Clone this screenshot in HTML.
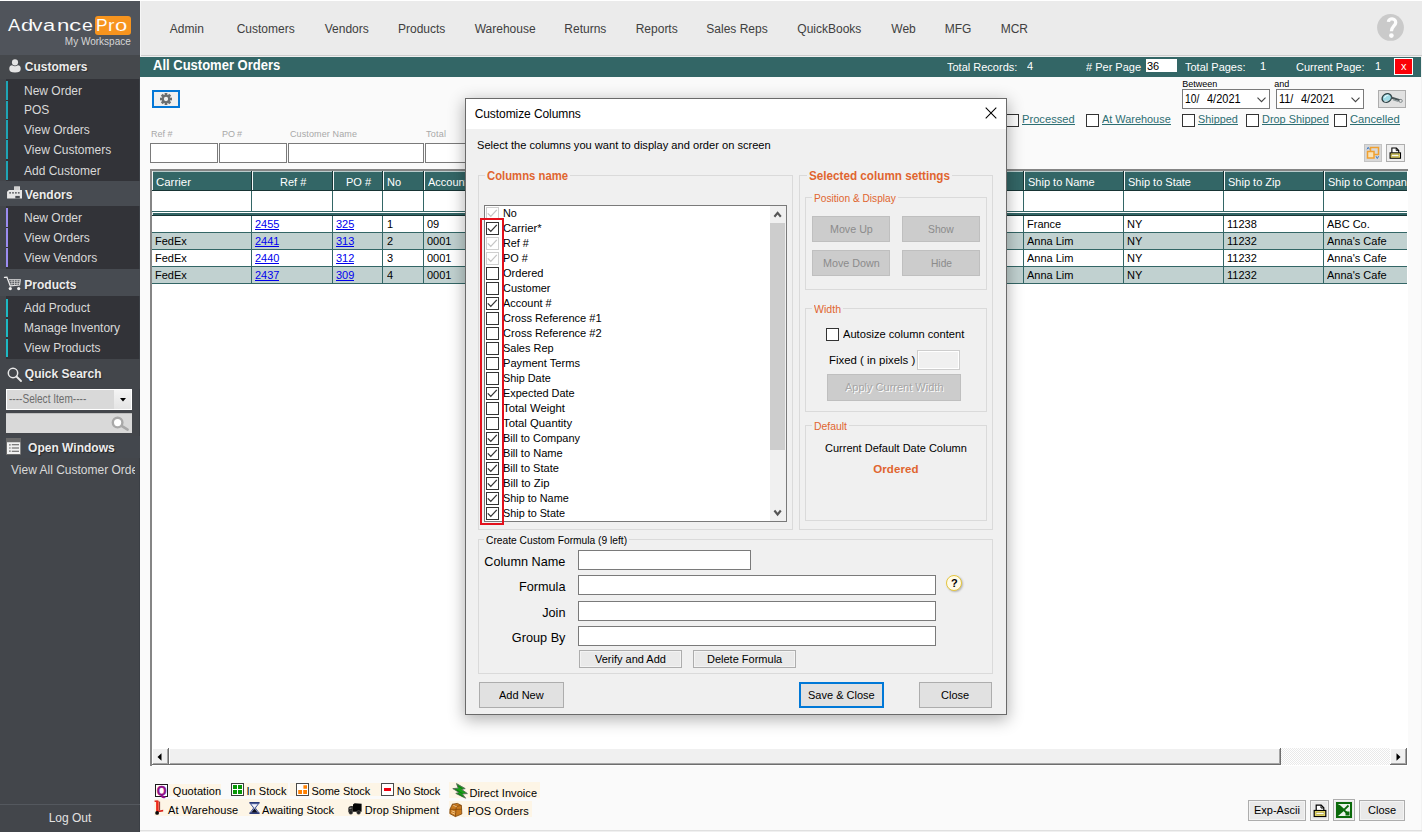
<!DOCTYPE html>
<html>
<head>
<meta charset="utf-8">
<title>All Customer Orders</title>
<style>
*{box-sizing:border-box;margin:0;padding:0}
html,body{width:1422px;height:832px;overflow:hidden;background:#fafafa;font-family:"Liberation Sans",sans-serif;font-size:11px;color:#000}
.a{position:absolute}
.t{position:absolute;white-space:nowrap;line-height:1}
svg{display:block;overflow:visible}
</style>
</head>
<body>
<!-- sidebar -->
<div class="a" style="left:0px;top:0px;width:140px;height:832px;background:#43464b;border-right:1px solid #3b3f45"></div>
<div class="a" style="left:0px;top:0px;width:140px;height:55px;background:#50545b"></div>
<div class="t" style="left:7.95px;top:18px;font-size:16px;color:#fff;transform:scaleX(1.151);transform-origin:0 0;-webkit-text-stroke:.08px #50545b">A</div>
<div class="t" style="left:20.57px;top:18px;font-size:16px;color:#fff;transform:scaleX(1.375);transform-origin:0 0;-webkit-text-stroke:.08px #50545b">d</div>
<div class="t" style="left:31.90px;top:18px;font-size:16px;color:#fff;transform:scaleX(1.301);transform-origin:0 0;-webkit-text-stroke:.08px #50545b">v</div>
<div class="t" style="left:43.17px;top:18px;font-size:16px;color:#fff;transform:scaleX(1.366);transform-origin:0 0;-webkit-text-stroke:.08px #50545b">a</div>
<div class="t" style="left:56.70px;top:18px;font-size:16px;color:#fff;transform:scaleX(1.391);transform-origin:0 0;-webkit-text-stroke:.08px #50545b">n</div>
<div class="t" style="left:69.36px;top:18px;font-size:16px;color:#fff;transform:scaleX(1.526);transform-origin:0 0;-webkit-text-stroke:.08px #50545b">c</div>
<div class="t" style="left:81.97px;top:18px;font-size:16px;color:#fff;transform:scaleX(1.223);transform-origin:0 0;-webkit-text-stroke:.08px #50545b">e</div>
<div class="a" style="left:94.7px;top:16px;width:36.2px;height:18.6px;background:#f7941e;border-radius:3px"></div>
<div class="t" style="left:96.37px;top:18px;font-size:16px;color:#fff;transform:scaleX(1.080);transform-origin:0 0;-webkit-text-stroke:.08px #f7941e">P</div>
<div class="t" style="left:108.30px;top:18px;font-size:16px;color:#fff;transform:scaleX(1.200);transform-origin:0 0;-webkit-text-stroke:.08px #f7941e">r</div>
<div class="t" style="left:115.36px;top:18px;font-size:16px;color:#fff;transform:scaleX(1.376);transform-origin:0 0;-webkit-text-stroke:.08px #f7941e">o</div>
<div class="t" style="left:64.86px;top:37px;font-size:10px;color:#d6d6d6">My Workspace</div>
<div class="a" style="left:0px;top:55px;width:140px;height:24px;background:#45484c"></div>
<div class="t" style="left:24.80px;top:61px;font-size:12px;color:#ececec;font-weight:bold;text-shadow:1px 1px 1px rgba(0,0,0,.4)">Customers</div>
<div class="a" style="left:6px;top:79px;width:133px;height:102px;background:#323338"></div>
<div class="a" style="left:6px;top:81.1px;width:2px;height:18.6px;background:#1fa5b6"></div>
<div class="t" style="left:24.00px;top:85px;font-size:12px;color:#d9d9d9">New Order</div>
<div class="a" style="left:6px;top:100.6px;width:2px;height:18.6px;background:#1fa5b6"></div>
<div class="t" style="left:24.00px;top:104px;font-size:12px;color:#d9d9d9">POS</div>
<div class="a" style="left:6px;top:120.4px;width:2px;height:18.6px;background:#1fa5b6"></div>
<div class="t" style="left:24.00px;top:124px;font-size:12px;color:#d9d9d9">View Orders</div>
<div class="a" style="left:6px;top:140.4px;width:2px;height:18.6px;background:#1fa5b6"></div>
<div class="t" style="left:24.00px;top:144px;font-size:12px;color:#d9d9d9">View Customers</div>
<div class="a" style="left:6px;top:161.1px;width:2px;height:18.6px;background:#1fa5b6"></div>
<div class="t" style="left:24.00px;top:165px;font-size:12px;color:#d9d9d9">Add Customer</div>
<div class="a" style="left:0px;top:181px;width:140px;height:25px;background:#474b51"></div>
<div class="t" style="left:25.00px;top:189px;font-size:12px;color:#ececec;font-weight:bold;text-shadow:1px 1px 1px rgba(0,0,0,.4)">Vendors</div>
<div class="a" style="left:6px;top:206px;width:133px;height:62.5px;background:#323338"></div>
<div class="a" style="left:6px;top:208.2px;width:2px;height:18.6px;background:#9b8cf0"></div>
<div class="t" style="left:24.00px;top:212px;font-size:12px;color:#d9d9d9">New Order</div>
<div class="a" style="left:6px;top:228.4px;width:2px;height:18.6px;background:#9b8cf0"></div>
<div class="t" style="left:24.00px;top:232px;font-size:12px;color:#d9d9d9">View Orders</div>
<div class="a" style="left:6px;top:248.3px;width:2px;height:18.6px;background:#9b8cf0"></div>
<div class="t" style="left:24.00px;top:252px;font-size:12px;color:#d9d9d9">View Vendors</div>
<div class="a" style="left:0px;top:268.5px;width:140px;height:27.5px;background:#474b51"></div>
<div class="t" style="left:24.30px;top:279px;font-size:12px;color:#ececec;font-weight:bold;text-shadow:1px 1px 1px rgba(0,0,0,.4)">Products</div>
<div class="a" style="left:6px;top:296px;width:133px;height:62.5px;background:#323338"></div>
<div class="a" style="left:6px;top:298.6px;width:2px;height:18.6px;background:#1db9c3"></div>
<div class="t" style="left:24.00px;top:302px;font-size:12px;color:#d9d9d9">Add Product</div>
<div class="a" style="left:6px;top:318.6px;width:2px;height:18.6px;background:#1db9c3"></div>
<div class="t" style="left:24.00px;top:322px;font-size:12px;color:#d9d9d9">Manage Inventory</div>
<div class="a" style="left:6px;top:338.6px;width:2px;height:18.6px;background:#1db9c3"></div>
<div class="t" style="left:24.00px;top:342px;font-size:12px;color:#d9d9d9">View Products</div>
<div class="a" style="left:0px;top:358.5px;width:140px;height:30px;background:#43464b"></div>
<div class="t" style="left:24.80px;top:368px;font-size:12px;color:#ececec;font-weight:bold;text-shadow:1px 1px 1px rgba(0,0,0,.4)">Quick Search</div>
<svg class="a" style="left:8.5px;top:58.5px" width="12" height="13.85" viewBox="0 0 13 15"><circle cx="6.5" cy="3.7" r="3.3" fill="#e4e4e4"/><path d="M0.3 10.8 Q0.3 6.9 3.3 6.8 Q6.5 9 9.7 6.8 Q12.7 6.9 12.7 10.8 Q12.7 14.6 6.5 14.6 Q0.3 14.6 0.3 10.8Z" fill="#e4e4e4"/></svg>
<svg class="a" style="left:7px;top:185.8px" width="15" height="13" viewBox="0 0 15 13"><path d="M7.05 0.35h5.95v4.2h-5.95z" fill="#dcdcdc"/><path d="M8.3 0.6v3.4M9.4 0.6v3.4M10.5 0.6v3.4M11.6 0.6v3.4" stroke="#c4c4c4" stroke-width=".55"/><path d="M0.05 5.8 L2 3.95 H15 V12.4 H0.05Z" fill="#e6e6e6"/><path d="M2.25 6.2h1.7v1.3h-1.7zM5.15 6.2h1.7v1.3h-1.7zM8.05 6.2h1.7v1.3h-1.7zM10.9 6.2h1.7v1.3h-1.7z" fill="#3c3f44"/><path d="M8.3 9.9h4.5v2.5h-4.5z" fill="#4a4d52"/></svg>
<svg class="a" style="left:4px;top:276px" width="17" height="15" viewBox="0 0 17 15"><path d="M0.5 1.35 L2.9 1.1 L6.3 9.9" fill="none" stroke="#ececec" stroke-width="1.3" stroke-linecap="round"/><path d="M4.9 3.75 H16.3 L15.6 9 L6.3 9.9" fill="none" stroke="#e4e4e4" stroke-width="1.1"/><path d="M7.9 3.8v5.8M10.5 3.8v5.5M13.1 3.8v5.3M5.6 5.7h10.4M6.3 7.6h9.6" stroke="#d6d6d6" stroke-width=".75"/><circle cx="6.3" cy="12.6" r="1.6" fill="#efefef"/><circle cx="14.7" cy="12.6" r="1.6" fill="#efefef"/></svg>
<svg class="a" style="left:6.5px;top:366.5px" width="15" height="15" viewBox="0 0 15 15"><circle cx="6" cy="6" r="4.7" fill="none" stroke="#e8e8e8" stroke-width="1.5"/><path d="M9.5 9.5 L14 14" stroke="#e8e8e8" stroke-width="1.9" stroke-linecap="round"/></svg>
<div class="a" style="left:6px;top:389px;width:126px;height:21px;background:#fff"></div>
<div class="a" style="left:7px;top:390px;width:107px;height:19px;background:#d9d9d9"></div>
<div class="a" style="left:114px;top:390px;width:17px;height:19px;background:linear-gradient(#f4f4f4,#e4e4e4)"></div>
<div class="t" style="left:8.6px;top:393px;font-size:12px;color:#6c6c6c;transform:scaleX(.84);transform-origin:0 0">----Select Item----</div>
<svg class="a" style="left:120.3px;top:397.5px" width="6" height="4" viewBox="0 0 6 4"><path d="M0 0H6L3 3.6Z" fill="#000"/></svg>
<div class="a" style="left:6px;top:412.5px;width:126px;height:20.5px;background:#d9d9d9;border-top:1px solid #bdbdbd"></div>
<svg class="a" style="left:110.5px;top:416px" width="18" height="15" viewBox="0 0 18 15"><circle cx="6.6" cy="6.6" r="4.8" fill="#fff" stroke="#a9a9a9" stroke-width="2.4"/><path d="M11 10.2 L16.6 13.6" stroke="#a9a9a9" stroke-width="2.6" stroke-linecap="round"/></svg>
<div class="a" style="left:3px;top:436px;width:137px;height:22px;background:#43474d"></div>
<div class="a" style="left:6px;top:438px;width:15.2px;height:17px;background:#6b6b6b"></div>
<svg class="a" style="left:6px;top:438px" width="15.2" height="17" viewBox="0 0 15.2 17"><path d="M1 4.2h13.2v11.8h-10.8l-2.4-0z" fill="#f2f2f2"/><path d="M3.2 6.8h1.4M3.2 10h1.4M3.2 13.2h1.4" stroke="#555" stroke-width="1.2"/><path d="M5.8 6.8h7.2M5.8 10h7.2M5.8 13.2h7.2" stroke="#555" stroke-width="1.1"/></svg>
<div class="t" style="left:28.10px;top:442px;font-size:12px;color:#ececec;font-weight:bold;text-shadow:1px 1px 1px rgba(0,0,0,.55)">Open Windows</div>
<div class="a" style="left:0;top:460px;width:135px;height:20px;overflow:hidden"><div class="t" style="left:11.00px;top:4px;font-size:12px;color:#d9d9d9">View All Customer Orde</div></div>
<div class="a" style="left:0px;top:803.5px;width:140px;height:1px;background:#54585e"></div>
<div class="t" style="left:48.65px;top:812px;font-size:12px;color:#e2e2e2">Log Out</div>
<!-- topbar -->
<div class="a" style="left:140px;top:0px;width:1282px;height:55px;background:#ebebeb"></div>
<div class="a" style="left:140px;top:55px;width:1282px;height:1px;background:#cdcdcd"></div>
<div class="a" style="left:140px;top:56px;width:1282px;height:1px;background:#efefef"></div>
<div class="a" style="left:0px;top:0px;width:1422px;height:1px;background:#fff"></div>
<div class="a" style="left:140px;top:1px;width:1px;height:55px;background:#f6f6f6"></div>
<div class="a" style="left:1421px;top:57px;width:1px;height:775px;background:#f2f2f2"></div>
<div class="t" style="left:169.80px;top:23px;font-size:12px;color:#404040">Admin</div>
<div class="t" style="left:236.70px;top:23px;font-size:12px;color:#404040">Customers</div>
<div class="t" style="left:324.70px;top:23px;font-size:12px;color:#404040">Vendors</div>
<div class="t" style="left:398.00px;top:23px;font-size:12px;color:#404040">Products</div>
<div class="t" style="left:474.70px;top:23px;font-size:12px;color:#404040">Warehouse</div>
<div class="t" style="left:564.30px;top:23px;font-size:12px;color:#404040">Returns</div>
<div class="t" style="left:635.70px;top:23px;font-size:12px;color:#404040">Reports</div>
<div class="t" style="left:706.30px;top:23px;font-size:12px;color:#404040">Sales Reps</div>
<div class="t" style="left:797.30px;top:23px;font-size:12px;color:#404040">QuickBooks</div>
<div class="t" style="left:891.30px;top:23px;font-size:12px;color:#404040">Web</div>
<div class="t" style="left:944.70px;top:23px;font-size:12px;color:#404040">MFG</div>
<div class="t" style="left:1000.70px;top:23px;font-size:12px;color:#404040">MCR</div>
<svg class="a" style="left:1377px;top:14px" width="27" height="27" viewBox="0 0 27 27"><circle cx="13.5" cy="13.4" r="13.4" fill="#cacaca"/><path d="M11.4 7.9 C11.6 3.9 18.9 3.8 18.7 8.6 C18.6 11.9 14.5 12.3 14.4 17.3" fill="none" stroke="#fdfdfd" stroke-width="3.3"/><circle cx="14.4" cy="21.6" r="2.35" fill="#fdfdfd"/></svg>
<div class="a" style="left:140px;top:57px;width:1281px;height:20px;background:#336666"></div>
<div class="t" style="left:152.50px;top:58px;font-size:14px;transform:scaleX(0.9290);transform-origin:0 0;color:#fff;font-weight:bold">All Customer Orders</div>
<div class="t" style="left:947.30px;top:61px;font-size:11.75px;transform:scaleX(0.9362);transform-origin:0 0;color:#fff">Total Records:</div>
<div class="t" style="left:1027.00px;top:60px;font-size:11.75px;transform:scaleX(0.9362);transform-origin:0 0;color:#fff">4</div>
<div class="t" style="left:1085.70px;top:61px;font-size:11.75px;transform:scaleX(0.9362);transform-origin:0 0;color:#fff"># Per Page</div>
<div class="a" style="left:1146px;top:59.3px;width:30.5px;height:13px;background:#fff"></div>
<div class="t" style="left:1146.60px;top:60px;font-size:11.75px;transform:scaleX(0.9362);transform-origin:0 0;color:#000">36</div>
<div class="t" style="left:1185.00px;top:61px;font-size:11.75px;transform:scaleX(0.9362);transform-origin:0 0;color:#fff">Total Pages:</div>
<div class="t" style="left:1259.50px;top:60px;font-size:11.75px;transform:scaleX(0.9362);transform-origin:0 0;color:#fff">1</div>
<div class="t" style="left:1296.00px;top:61px;font-size:11.75px;transform:scaleX(0.9362);transform-origin:0 0;color:#fff">Current Page:</div>
<div class="t" style="left:1375.20px;top:60px;font-size:11.75px;transform:scaleX(0.9362);transform-origin:0 0;color:#fff">1</div>
<div class="a" style="left:1394px;top:58.3px;width:19px;height:17px;background:#fb0007;border:1px solid #fff"></div>
<div class="t" style="left:1400.75px;top:60px;font-size:11.75px;transform:scaleX(0.9362);transform-origin:0 0;color:#fff">x</div>
<!-- content -->
<div class="a" style="left:152px;top:90px;width:28px;height:18px;background:#efefef;border:2px solid #0377d7"></div>
<svg class="a" style="left:160px;top:93px" width="12" height="12" viewBox="-6 -6 12 12"><g fill="#6b6e70"><rect x="-1.35" y="-6" width="2.7" height="3.2" transform="rotate(0)"/><rect x="-1.35" y="-6" width="2.7" height="3.2" transform="rotate(45)"/><rect x="-1.35" y="-6" width="2.7" height="3.2" transform="rotate(90)"/><rect x="-1.35" y="-6" width="2.7" height="3.2" transform="rotate(135)"/><rect x="-1.35" y="-6" width="2.7" height="3.2" transform="rotate(180)"/><rect x="-1.35" y="-6" width="2.7" height="3.2" transform="rotate(225)"/><rect x="-1.35" y="-6" width="2.7" height="3.2" transform="rotate(270)"/><rect x="-1.35" y="-6" width="2.7" height="3.2" transform="rotate(315)"/></g><circle r="3.2" fill="none" stroke="#6b6e70" stroke-width="2.1"/></svg>
<div class="t" style="left:151.00px;top:130px;font-size:9px;letter-spacing:-0.022px;color:#a8a8a8">Ref #</div>
<div class="t" style="left:222.00px;top:130px;font-size:9px;letter-spacing:-0.127px;color:#a8a8a8">PO #</div>
<div class="t" style="left:290.00px;top:130px;font-size:9px;letter-spacing:0.114px;color:#a8a8a8">Customer Name</div>
<div class="t" style="left:426.00px;top:130px;font-size:9px;letter-spacing:0.238px;color:#a8a8a8">Total</div>
<div class="a" style="left:150px;top:143px;width:68px;height:20px;background:#fff;border:1px solid #7a7a7a"></div>
<div class="a" style="left:219px;top:143px;width:68px;height:20px;background:#fff;border:1px solid #7a7a7a"></div>
<div class="a" style="left:288px;top:143px;width:136px;height:20px;background:#fff;border:1px solid #7a7a7a"></div>
<div class="a" style="left:425px;top:143px;width:135px;height:20px;background:#fff;border:1px solid #7a7a7a"></div>
<div class="t" style="left:1182.30px;top:80px;font-size:9px;color:#000">Between</div>
<div class="t" style="left:1274.20px;top:80px;font-size:9px;color:#000">and</div>
<div class="a" style="left:1182px;top:89px;width:88px;height:20px;background:#fff;border:1px solid #7a7a7a"></div>
<div class="t" style="left:1184.60px;top:93px;font-size:12px;transform:scaleX(0.8573);transform-origin:0 0;color:#000">10/</div>
<div class="t" style="left:1207.20px;top:93px;font-size:12px;transform:scaleX(0.9155);transform-origin:0 0;color:#000">4/2021</div>
<svg class="a" style="left:1256.8px;top:97px" width="9" height="6" viewBox="0 0 9 6"><path d="M0.5 0.6 L4.5 4.6 L8.5 0.6" fill="none" stroke="#444" stroke-width="1.1"/></svg>
<div class="a" style="left:1276px;top:89px;width:88px;height:20px;background:#fff;border:1px solid #7a7a7a"></div>
<div class="t" style="left:1278.60px;top:93px;font-size:12px;transform:scaleX(0.9057);transform-origin:0 0;color:#000">11/</div>
<div class="t" style="left:1301.20px;top:93px;font-size:12px;transform:scaleX(0.9155);transform-origin:0 0;color:#000">4/2021</div>
<svg class="a" style="left:1350.8px;top:97px" width="9" height="6" viewBox="0 0 9 6"><path d="M0.5 0.6 L4.5 4.6 L8.5 0.6" fill="none" stroke="#444" stroke-width="1.1"/></svg>
<div class="a" style="left:1378px;top:90px;width:28px;height:18px;background:#e1e1e1;border:1px solid #adadad"></div>
<svg class="a" style="left:1381px;top:92px" width="22" height="14" viewBox="0 0 22 14"><ellipse cx="5.8" cy="6" rx="4.9" ry="4.1" transform="rotate(-32 5.8 6)" fill="#9fdbe6" stroke="#2f4346" stroke-width="1.4"/><path d="M3.4 5.8 Q4.6 3.2 7.4 3" fill="none" stroke="#e8fbff" stroke-width="1.1"/><path d="M3.6 9.8 L6.4 8.6" stroke="#c8d4d6" stroke-width="1.6"/><path d="M10 5.4 L19.6 8.6" stroke="#4a5557" stroke-width="2.1"/><path d="M12 7.6 l5.4 1.9" stroke="#8a9698" stroke-width="1.3"/><ellipse cx="19.6" cy="8.9" rx="1.7" ry="1.5" fill="#e6e6e6" stroke="#6a7476" stroke-width=".8"/></svg>
<div class="a" style="left:1006px;top:114px;width:13px;height:13px;background:#fff;border:1px solid #333;"></div>
<div class="t" style="left:1022.00px;top:113px;font-size:11.75px;transform:scaleX(0.9494);transform-origin:0 0;color:#2d6e72">Processed</div>
<div class="a" style="left:1022px;top:124px;width:53px;height:1px;background:#2d6e72"></div>
<div class="a" style="left:1086px;top:114px;width:13px;height:13px;background:#fff;border:1px solid #333;"></div>
<div class="t" style="left:1102.00px;top:113px;font-size:11.75px;transform:scaleX(0.9282);transform-origin:0 0;color:#2d6e72">At Warehouse</div>
<div class="a" style="left:1102px;top:124px;width:69px;height:1px;background:#2d6e72"></div>
<div class="a" style="left:1182px;top:114px;width:13px;height:13px;background:#fff;border:1px solid #333;"></div>
<div class="t" style="left:1198.00px;top:113px;font-size:11.75px;transform:scaleX(0.9207);transform-origin:0 0;color:#2d6e72">Shipped</div>
<div class="a" style="left:1198px;top:124px;width:40px;height:1px;background:#2d6e72"></div>
<div class="a" style="left:1246px;top:114px;width:13px;height:13px;background:#fff;border:1px solid #333;"></div>
<div class="t" style="left:1262.00px;top:113px;font-size:11.75px;transform:scaleX(0.9283);transform-origin:0 0;color:#2d6e72">Drop Shipped</div>
<div class="a" style="left:1262px;top:124px;width:67px;height:1px;background:#2d6e72"></div>
<div class="a" style="left:1334px;top:114px;width:13px;height:13px;background:#fff;border:1px solid #333;"></div>
<div class="t" style="left:1350.00px;top:113px;font-size:11.75px;transform:scaleX(0.9511);transform-origin:0 0;color:#2d6e72">Cancelled</div>
<div class="a" style="left:1350px;top:124px;width:50px;height:1px;background:#2d6e72"></div>
<div class="a" style="left:1364px;top:144px;width:18px;height:18px;background:#d8d8d8;border:1px solid #c4c4c4"></div>
<svg class="a" style="left:1366px;top:146px" width="14" height="14" viewBox="0 0 14 14"><rect x="4.5" y="1.5" width="8" height="7" fill="none" stroke="#f0a030" stroke-width="1.5"/><rect x="1.5" y="5.5" width="6.5" height="6.5" fill="#fbe3b5" stroke="#f0a030" stroke-width="1.5"/><path d="M10 10.2l1.3 2.3 1.3-2.3" fill="none" stroke="#3a79c9" stroke-width="1"/><path d="M1 3.3l1.2-2 1.2 2" fill="none" stroke="#3a79c9" stroke-width="1"/></svg>
<div class="a" style="left:1386px;top:144px;width:19px;height:18px;background:#efefef;border:1px solid #adadad"></div>
<svg class="a" style="left:1389px;top:146.5px" width="12.6" height="12.6" viewBox="0 0 14 14"><path d="M3.2 6.5V1.2h5l2.6 2.6v2.7" fill="#fff" stroke="#000" stroke-width="1.2"/><path d="M8 1.2v2.8h2.6" fill="none" stroke="#000" stroke-width="1"/><rect x="1.2" y="6.5" width="11.6" height="6" fill="#f3e56c" stroke="#000" stroke-width="1.2"/><rect x="3" y="8.6" width="8" height="1.6" fill="#fff" stroke="#8a8030" stroke-width=".5"/></svg>
<div class="a" style="left:150px;top:169px;width:1258px;height:597px;background:#fff;border-top:2px solid;border-left:2px solid;border-color:#858585;box-shadow:inset -1px -1px 0 #fff"></div>
<div class="a" style="left:0;top:0;width:1407px;height:766px;overflow:hidden"><div class="a" style="left:152px;top:171px;width:1255px;height:19px;background:#336666;border-top:1px solid #b9cccc"></div><div class="a" style="left:152px;top:190px;width:1255px;height:1px;background:#173434"></div><div class="a" style="left:152px;top:171px;width:1px;height:19px;background:#f4f7f7"></div><div class="a" style="left:251px;top:171px;width:1px;height:20px;background:#173434"></div><div class="t" style="left:156.20px;top:176px;font-size:11.75px;transform:scaleX(0.9736);transform-origin:0 0;color:#fff">Carrier</div><div class="a" style="left:252px;top:171px;width:1px;height:19px;background:#f4f7f7"></div><div class="a" style="left:332px;top:171px;width:1px;height:20px;background:#173434"></div><div class="t" style="left:280.36px;top:176px;font-size:11.75px;transform:scaleX(0.9362);transform-origin:0 0;color:#fff">Ref #</div><div class="a" style="left:333px;top:171px;width:1px;height:19px;background:#f4f7f7"></div><div class="a" style="left:382px;top:171px;width:1px;height:20px;background:#173434"></div><div class="t" style="left:346.47px;top:176px;font-size:11.75px;transform:scaleX(0.9362);transform-origin:0 0;color:#fff">PO #</div><div class="a" style="left:383px;top:171px;width:1px;height:19px;background:#f4f7f7"></div><div class="a" style="left:423px;top:171px;width:1px;height:20px;background:#173434"></div><div class="t" style="left:387.20px;top:176px;font-size:11.75px;transform:scaleX(0.9362);transform-origin:0 0;color:#fff">No</div><div class="a" style="left:424px;top:171px;width:1px;height:19px;background:#f4f7f7"></div><div class="a" style="left:523px;top:171px;width:1px;height:20px;background:#173434"></div><div class="t" style="left:428.20px;top:176px;font-size:11.75px;transform:scaleX(0.9362);transform-origin:0 0;color:#fff">Account #</div><div class="a" style="left:524px;top:171px;width:1px;height:19px;background:#f4f7f7"></div><div class="a" style="left:623px;top:171px;width:1px;height:20px;background:#173434"></div><div class="t" style="left:528.20px;top:176px;font-size:11.75px;transform:scaleX(0.9362);transform-origin:0 0;color:#fff">Expected Date</div><div class="a" style="left:624px;top:171px;width:1px;height:19px;background:#f4f7f7"></div><div class="a" style="left:723px;top:171px;width:1px;height:20px;background:#173434"></div><div class="t" style="left:628.20px;top:176px;font-size:11.75px;transform:scaleX(0.9362);transform-origin:0 0;color:#fff">Bill to Company</div><div class="a" style="left:724px;top:171px;width:1px;height:19px;background:#f4f7f7"></div><div class="a" style="left:823px;top:171px;width:1px;height:20px;background:#173434"></div><div class="t" style="left:728.20px;top:176px;font-size:11.75px;transform:scaleX(0.9362);transform-origin:0 0;color:#fff">Bill to Name</div><div class="a" style="left:824px;top:171px;width:1px;height:19px;background:#f4f7f7"></div><div class="a" style="left:923px;top:171px;width:1px;height:20px;background:#173434"></div><div class="t" style="left:828.20px;top:176px;font-size:11.75px;transform:scaleX(0.9362);transform-origin:0 0;color:#fff">Bill to State</div><div class="a" style="left:924px;top:171px;width:1px;height:19px;background:#f4f7f7"></div><div class="a" style="left:1023px;top:171px;width:1px;height:20px;background:#173434"></div><div class="t" style="left:928.20px;top:176px;font-size:11.75px;transform:scaleX(0.9362);transform-origin:0 0;color:#fff">Bill to Zip</div><div class="a" style="left:1024px;top:171px;width:1px;height:19px;background:#f4f7f7"></div><div class="a" style="left:1123px;top:171px;width:1px;height:20px;background:#173434"></div><div class="t" style="left:1028.20px;top:176px;font-size:11.75px;transform:scaleX(0.9362);transform-origin:0 0;color:#fff">Ship to Name</div><div class="a" style="left:1124px;top:171px;width:1px;height:19px;background:#f4f7f7"></div><div class="a" style="left:1223px;top:171px;width:1px;height:20px;background:#173434"></div><div class="t" style="left:1128.20px;top:176px;font-size:11.75px;transform:scaleX(0.9362);transform-origin:0 0;color:#fff">Ship to State</div><div class="a" style="left:1224px;top:171px;width:1px;height:19px;background:#f4f7f7"></div><div class="a" style="left:1323px;top:171px;width:1px;height:20px;background:#173434"></div><div class="t" style="left:1228.20px;top:176px;font-size:11.75px;transform:scaleX(0.9362);transform-origin:0 0;color:#fff">Ship to Zip</div><div class="a" style="left:1324px;top:171px;width:1px;height:19px;background:#f4f7f7"></div><div class="a" style="left:1423px;top:171px;width:1px;height:20px;background:#173434"></div><div class="t" style="left:1328.20px;top:176px;font-size:11.75px;transform:scaleX(0.9362);transform-origin:0 0;color:#fff">Ship to Company</div><div class="a" style="left:152px;top:211px;width:1255px;height:1px;background:#336666"></div><div class="a" style="left:152px;top:213px;width:1255px;height:2px;background:#336666"></div><div class="a" style="left:152px;top:215px;width:1255px;height:1px;background:#173434"></div><div class="a" style="left:152px;top:212px;width:1px;height:3px;background:#e6eded"></div><div class="a" style="left:152px;top:232px;width:1255px;height:1px;background:#336666"></div><div class="t" style="left:155.00px;top:218px;font-size:11.75px;transform:scaleX(0.0000);transform-origin:0 0;color:#000"></div><div class="t" style="left:255.00px;top:218px;font-size:11.75px;transform:scaleX(0.9362);transform-origin:0 0;color:#0000ee">2455</div><div class="a" style="left:255px;top:229px;width:24px;height:1px;background:#0000ee"></div><div class="t" style="left:336.00px;top:218px;font-size:11.75px;transform:scaleX(0.9362);transform-origin:0 0;color:#0000ee">325</div><div class="a" style="left:336px;top:229px;width:18px;height:1px;background:#0000ee"></div><div class="t" style="left:386.50px;top:218px;font-size:11.75px;transform:scaleX(0.9362);transform-origin:0 0;color:#000">1</div><div class="t" style="left:427.20px;top:218px;font-size:11.75px;transform:scaleX(0.9362);transform-origin:0 0;color:#000">09</div><div class="t" style="left:1027.00px;top:218px;font-size:11.75px;transform:scaleX(0.9362);transform-origin:0 0;color:#000">France</div><div class="t" style="left:1127.00px;top:218px;font-size:11.75px;transform:scaleX(0.9362);transform-origin:0 0;color:#000">NY</div><div class="t" style="left:1227.00px;top:218px;font-size:11.75px;transform:scaleX(0.9362);transform-origin:0 0;color:#000">11238</div><div class="t" style="left:1327.00px;top:218px;font-size:11.75px;transform:scaleX(0.9362);transform-origin:0 0;color:#000">ABC Co.</div><div class="a" style="left:152px;top:233px;width:1255px;height:16px;background:#c1d1d0"></div><div class="a" style="left:152px;top:249px;width:1255px;height:1px;background:#336666"></div><div class="t" style="left:155.00px;top:235px;font-size:11.75px;transform:scaleX(0.9362);transform-origin:0 0;color:#000">FedEx</div><div class="t" style="left:255.00px;top:235px;font-size:11.75px;transform:scaleX(0.9362);transform-origin:0 0;color:#0000ee">2441</div><div class="a" style="left:255px;top:246px;width:24px;height:1px;background:#0000ee"></div><div class="t" style="left:336.00px;top:235px;font-size:11.75px;transform:scaleX(0.9362);transform-origin:0 0;color:#0000ee">313</div><div class="a" style="left:336px;top:246px;width:18px;height:1px;background:#0000ee"></div><div class="t" style="left:386.50px;top:235px;font-size:11.75px;transform:scaleX(0.9362);transform-origin:0 0;color:#000">2</div><div class="t" style="left:427.20px;top:235px;font-size:11.75px;transform:scaleX(0.9362);transform-origin:0 0;color:#000">0001</div><div class="t" style="left:1027.00px;top:235px;font-size:11.75px;transform:scaleX(0.9362);transform-origin:0 0;color:#000">Anna Lim</div><div class="t" style="left:1127.00px;top:235px;font-size:11.75px;transform:scaleX(0.9362);transform-origin:0 0;color:#000">NY</div><div class="t" style="left:1227.00px;top:235px;font-size:11.75px;transform:scaleX(0.9362);transform-origin:0 0;color:#000">11232</div><div class="t" style="left:1327.00px;top:235px;font-size:11.75px;transform:scaleX(0.9362);transform-origin:0 0;color:#000">Anna's Cafe</div><div class="a" style="left:152px;top:266px;width:1255px;height:1px;background:#336666"></div><div class="t" style="left:155.00px;top:252px;font-size:11.75px;transform:scaleX(0.9362);transform-origin:0 0;color:#000">FedEx</div><div class="t" style="left:255.00px;top:252px;font-size:11.75px;transform:scaleX(0.9362);transform-origin:0 0;color:#0000ee">2440</div><div class="a" style="left:255px;top:263px;width:24px;height:1px;background:#0000ee"></div><div class="t" style="left:336.00px;top:252px;font-size:11.75px;transform:scaleX(0.9362);transform-origin:0 0;color:#0000ee">312</div><div class="a" style="left:336px;top:263px;width:18px;height:1px;background:#0000ee"></div><div class="t" style="left:386.50px;top:252px;font-size:11.75px;transform:scaleX(0.9362);transform-origin:0 0;color:#000">3</div><div class="t" style="left:427.20px;top:252px;font-size:11.75px;transform:scaleX(0.9362);transform-origin:0 0;color:#000">0001</div><div class="t" style="left:1027.00px;top:252px;font-size:11.75px;transform:scaleX(0.9362);transform-origin:0 0;color:#000">Anna Lim</div><div class="t" style="left:1127.00px;top:252px;font-size:11.75px;transform:scaleX(0.9362);transform-origin:0 0;color:#000">NY</div><div class="t" style="left:1227.00px;top:252px;font-size:11.75px;transform:scaleX(0.9362);transform-origin:0 0;color:#000">11232</div><div class="t" style="left:1327.00px;top:252px;font-size:11.75px;transform:scaleX(0.9362);transform-origin:0 0;color:#000">Anna's Cafe</div><div class="a" style="left:152px;top:267px;width:1255px;height:16px;background:#c1d1d0"></div><div class="a" style="left:152px;top:283px;width:1255px;height:1px;background:#336666"></div><div class="t" style="left:155.00px;top:269px;font-size:11.75px;transform:scaleX(0.9362);transform-origin:0 0;color:#000">FedEx</div><div class="t" style="left:255.00px;top:269px;font-size:11.75px;transform:scaleX(0.9362);transform-origin:0 0;color:#0000ee">2437</div><div class="a" style="left:255px;top:280px;width:24px;height:1px;background:#0000ee"></div><div class="t" style="left:336.00px;top:269px;font-size:11.75px;transform:scaleX(0.9362);transform-origin:0 0;color:#0000ee">309</div><div class="a" style="left:336px;top:280px;width:18px;height:1px;background:#0000ee"></div><div class="t" style="left:386.50px;top:269px;font-size:11.75px;transform:scaleX(0.9362);transform-origin:0 0;color:#000">4</div><div class="t" style="left:427.20px;top:269px;font-size:11.75px;transform:scaleX(0.9362);transform-origin:0 0;color:#000">0001</div><div class="t" style="left:1027.00px;top:269px;font-size:11.75px;transform:scaleX(0.9362);transform-origin:0 0;color:#000">Anna Lim</div><div class="t" style="left:1127.00px;top:269px;font-size:11.75px;transform:scaleX(0.9362);transform-origin:0 0;color:#000">NY</div><div class="t" style="left:1227.00px;top:269px;font-size:11.75px;transform:scaleX(0.9362);transform-origin:0 0;color:#000">11232</div><div class="t" style="left:1327.00px;top:269px;font-size:11.75px;transform:scaleX(0.9362);transform-origin:0 0;color:#000">Anna's Cafe</div><div class="a" style="left:251px;top:191px;width:1px;height:20px;background:#336666"></div><div class="a" style="left:251px;top:216px;width:1px;height:68px;background:#336666"></div><div class="a" style="left:332px;top:191px;width:1px;height:20px;background:#336666"></div><div class="a" style="left:332px;top:216px;width:1px;height:68px;background:#336666"></div><div class="a" style="left:382px;top:191px;width:1px;height:20px;background:#336666"></div><div class="a" style="left:382px;top:216px;width:1px;height:68px;background:#336666"></div><div class="a" style="left:423px;top:191px;width:1px;height:20px;background:#336666"></div><div class="a" style="left:423px;top:216px;width:1px;height:68px;background:#336666"></div><div class="a" style="left:523px;top:191px;width:1px;height:20px;background:#336666"></div><div class="a" style="left:523px;top:216px;width:1px;height:68px;background:#336666"></div><div class="a" style="left:623px;top:191px;width:1px;height:20px;background:#336666"></div><div class="a" style="left:623px;top:216px;width:1px;height:68px;background:#336666"></div><div class="a" style="left:723px;top:191px;width:1px;height:20px;background:#336666"></div><div class="a" style="left:723px;top:216px;width:1px;height:68px;background:#336666"></div><div class="a" style="left:823px;top:191px;width:1px;height:20px;background:#336666"></div><div class="a" style="left:823px;top:216px;width:1px;height:68px;background:#336666"></div><div class="a" style="left:923px;top:191px;width:1px;height:20px;background:#336666"></div><div class="a" style="left:923px;top:216px;width:1px;height:68px;background:#336666"></div><div class="a" style="left:1023px;top:191px;width:1px;height:20px;background:#336666"></div><div class="a" style="left:1023px;top:216px;width:1px;height:68px;background:#336666"></div><div class="a" style="left:1123px;top:191px;width:1px;height:20px;background:#336666"></div><div class="a" style="left:1123px;top:216px;width:1px;height:68px;background:#336666"></div><div class="a" style="left:1223px;top:191px;width:1px;height:20px;background:#336666"></div><div class="a" style="left:1223px;top:216px;width:1px;height:68px;background:#336666"></div><div class="a" style="left:1323px;top:191px;width:1px;height:20px;background:#336666"></div><div class="a" style="left:1323px;top:216px;width:1px;height:68px;background:#336666"></div><div class="a" style="left:1423px;top:191px;width:1px;height:20px;background:#336666"></div><div class="a" style="left:1423px;top:216px;width:1px;height:68px;background:#336666"></div></div>
<div class="a" style="left:152px;top:748px;width:1255px;height:17px;background:#f6f6f6;background-image:repeating-conic-gradient(#fff 0 25%,#e9e9e9 0 50%);background-size:2px 2px"></div>
<div class="a" style="left:152px;top:748px;width:17px;height:17px;background:#f0f0f0;box-shadow:inset -1px -1px 0 #6e6e6e,inset 1px 1px 0 #fff,inset -2px -2px 0 #a5a5a5"></div>
<svg class="a" style="left:157px;top:752.6px" width="5" height="8" viewBox="0 0 5 8"><path d="M4.5 0.3V7.7L0.5 4Z" fill="#000"/></svg>
<div class="a" style="left:169px;top:748px;width:1112px;height:17px;background:#f0f0f0;box-shadow:inset -1px -1px 0 #6e6e6e,inset 1px 1px 0 #fff,inset -2px -2px 0 #a5a5a5"></div>
<div class="a" style="left:1390px;top:748px;width:17px;height:17px;background:#f0f0f0;box-shadow:inset -1px -1px 0 #6e6e6e,inset 1px 1px 0 #fff,inset -2px -2px 0 #a5a5a5"></div>
<svg class="a" style="left:1395.6px;top:752.6px" width="5" height="8" viewBox="0 0 5 8"><path d="M0.5 0.3V7.7L4.5 4Z" fill="#000"/></svg>
<!-- legend -->
<div class="a" style="left:168.6px;top:784px;width:52.4px;height:12px;background:#fdf5e6"></div>
<div class="a" style="left:244px;top:783px;width:44px;height:13px;background:#fdf5e6"></div>
<div class="a" style="left:289.5px;top:783px;width:150.7px;height:13px;background:#fdf5e6"></div>
<div class="a" style="left:154px;top:799px;width:285.2px;height:17px;background:#fdf5e6"></div>
<div class="a" style="left:448.9px;top:782px;width:91.1px;height:16px;background:#fdf5e6"></div>
<div class="a" style="left:448.9px;top:801px;width:82.9px;height:16px;background:#fdf5e6"></div>
<div class="a" style="left:155px;top:784px;width:13px;height:13px;background:#fff;border:1px solid #1a1a1a"></div>
<div class="t" style="left:156.64px;top:785px;font-size:12.5px;color:#8e0f86;font-weight:bold;-webkit-text-stroke:.45px #8e0f86">Q</div>
<div class="t" style="left:172.80px;top:786px;font-size:11px;letter-spacing:0.067px;color:#000">Quotation</div>
<svg class="a" style="left:231px;top:783px" width="13" height="13" viewBox="0 0 13 13"><rect x=".5" y=".5" width="12" height="12" fill="#fff" stroke="#3c3c3c"/><path d="M2 2h4v4h-4zM7 2h4v4h-4zM2 7h4v4h-4zM7 7h4v4h-4z" fill="#089808"/></svg>
<div class="t" style="left:246.50px;top:786px;font-size:11px;letter-spacing:0.020px;color:#000">In Stock</div>
<svg class="a" style="left:296px;top:783px" width="13" height="13" viewBox="0 0 13 13"><rect x=".5" y=".5" width="12" height="12" fill="#fff" stroke="#4a4a4a"/><path d="M7.4 2.2h3.6v3.6h-3.6zM2.2 7h3.8v4h-3.8zM7.2 7h3.8v4h-3.8z" fill="#ff8000"/></svg>
<div class="t" style="left:311.40px;top:786px;font-size:11px;letter-spacing:-0.060px;color:#000">Some Stock</div>
<svg class="a" style="left:381px;top:783px" width="13" height="13" viewBox="0 0 13 13"><rect x=".5" y=".5" width="12" height="12" fill="#fff" stroke="#4a4a4a"/><rect x="3" y="5" width="7" height="3" fill="#f00010"/></svg>
<div class="t" style="left:396.70px;top:786px;font-size:11px;letter-spacing:-0.166px;color:#000">No Stock</div>
<svg class="a" style="left:451.5px;top:782.5px" width="16" height="16" viewBox="0 0 16 16"><path d="M4.5 0.6 L13.2 5.6 L9.6 6.4 L15.4 10.6 L10.4 10.9 L13.6 15.2 L3.8 10.4 L7 9.4 L0.8 5.6 L6.2 5.2Z" fill="#16a016" stroke="#5a6a5a" stroke-width=".9"/><path d="M5.5 2.6l5 3.2M3.5 6.4l7 4.2M6 10.6l5 3" stroke="#0a6a0a" stroke-width=".7"/></svg>
<div class="t" style="left:469.60px;top:788px;font-size:11px;letter-spacing:0.062px;color:#000">Direct Invoice</div>
<svg class="a" style="left:154px;top:800px" width="10" height="15" viewBox="0 0 10 15"><path d="M0.6 1.2h3.6" stroke="#d01818" stroke-width="1.4"/><path d="M3.4 0.8v10.4" stroke="#ee2a1a" stroke-width="2.6"/><path d="M5.6 1.6v9" stroke="#7a1a10" stroke-width=".9"/><path d="M2.4 11l6.8-1.2v1.6l-6.8 1z" fill="#d82018"/><circle cx="3.1" cy="12.9" r="1.9" fill="#0a0a0a"/></svg>
<div class="t" style="left:168.00px;top:805px;font-size:11px;letter-spacing:0.084px;color:#000">At Warehouse</div>
<svg class="a" style="left:249px;top:802px" width="11" height="12" viewBox="0 0 11 12"><path d="M0.4 0.8h10.2M0.4 11.2h10.2" stroke="#2a3a78" stroke-width="1.5"/><path d="M1.2 1.4 L9.8 1.4 L6.3 6 L9.8 10.6 L1.2 10.6 L4.7 6Z" fill="#aeb9dc" stroke="#3a4a8a" stroke-width=".9"/><path d="M2.8 2.6 H8.2 L5.5 5.8Z" fill="#f4f4fa"/><path d="M5.5 6.6 L8.6 10.6 H2.4Z" fill="#0a0a1a"/></svg>
<div class="t" style="left:262.00px;top:805px;font-size:11px;letter-spacing:0.011px;color:#000">Awaiting Stock</div>
<svg class="a" style="left:348px;top:802.5px" width="14" height="12" viewBox="0 0 14 12"><path d="M5 1.4 L6.6 0.2 L13.6 0.8 V8.8 H5Z" fill="#050505"/><path d="M0.4 5 Q0.6 3.4 2.4 3.2 L4.8 3 V9 H0.4Z" fill="#111"/><path d="M1.3 4.8l2.3-.5v2h-2.3z" fill="#8a8a8a"/><circle cx="2.8" cy="9.4" r="1.9" fill="#222" stroke="#666" stroke-width=".5"/><circle cx="10.6" cy="9.4" r="1.9" fill="#222" stroke="#666" stroke-width=".5"/></svg>
<div class="t" style="left:364.80px;top:805px;font-size:11px;letter-spacing:0.072px;color:#000">Drop Shipment</div>
<svg class="a" style="left:449px;top:803px" width="14" height="14" viewBox="0 0 14 14"><path d="M3.4 1.2 L8.4 0.4 L12.4 2.4 L12.8 11 L6.4 13.6 L0.8 10.6 L1 6.2Z" fill="#c97a1e" stroke="#7a4208" stroke-width=".8"/><path d="M3.4 1.2 L7.6 3.4 L12.4 2.4 M7.6 3.4 L7 6.4 L1 6.2 M7 6.4 L6.4 13.6 M7 6.4 L12.6 6.2" fill="none" stroke="#7a4208" stroke-width=".7"/><path d="M4.2 2.2l3.6 1.6M2.6 7.8l3.6 1.4M2.4 9.6l3.6 1.6" stroke="#f6cf96" stroke-width=".9"/></svg>
<div class="t" style="left:467.70px;top:806px;font-size:11px;letter-spacing:0.140px;color:#000">POS Orders</div>
<div class="a" style="left:1248px;top:800px;width:58px;height:21px;background:#e9e9e9;border:1px solid #adadad;box-shadow:inset 0 0 0 1px #f3f3f3"></div>
<div class="t" style="left:1254.08px;top:804px;font-size:11.75px;transform:scaleX(0.9362);transform-origin:0 0;color:#000">Exp-Ascii</div>
<div class="a" style="left:1310px;top:800px;width:19px;height:21px;background:#e9e9e9;border:1px solid #adadad;box-shadow:inset 0 0 0 1px #f3f3f3"></div>
<svg class="a" style="left:1312.5px;top:803.5px" width="14" height="14" viewBox="0 0 14 14"><path d="M3.2 6.5V1.2h5l2.6 2.6v2.7" fill="#fff" stroke="#000" stroke-width="1.2"/><path d="M8 1.2v2.8h2.6" fill="none" stroke="#000" stroke-width="1"/><rect x="1.2" y="6.5" width="11.6" height="6" fill="#f3e56c" stroke="#000" stroke-width="1.2"/><rect x="3" y="8.6" width="8" height="1.6" fill="#fff" stroke="#8a8030" stroke-width=".5"/></svg>
<div class="a" style="left:1333px;top:799px;width:22px;height:22px;background:#e9e9e9;border:1px solid #adadad;box-shadow:inset 0 0 0 1px #f3f3f3"></div>
<div class="a" style="left:1336px;top:802px;width:16px;height:16px;background:#fff;border:2px solid #0b6a0b"></div>
<svg class="a" style="left:1338px;top:804px" width="12" height="12" viewBox="0 0 12 12"><rect width="12" height="12" fill="#eaf3ea"/><path d="M0 0L7 6L0 12Z" fill="#0b6a0b"/><path d="M1 1.5 L10.5 10.5 M10.5 1.5 L5.5 6.4" stroke="#0b6a0b" stroke-width="1.8"/><path d="M7.5 7.5h4v4h-4z" fill="#0b6a0b"/></svg>
<div class="a" style="left:1359px;top:800px;width:46px;height:21px;background:#e9e9e9;border:1px solid #adadad;box-shadow:inset 0 0 0 1px #f3f3f3"></div>
<div class="t" style="left:1367.94px;top:804px;font-size:11.75px;transform:scaleX(0.9362);transform-origin:0 0;color:#000">Close</div>
<div class="a" style="left:140px;top:830px;width:1282px;height:1px;background:#e0e0e0"></div>
<div class="a" style="left:140px;top:831px;width:1282px;height:1px;background:#f0f0f0"></div>
<!-- dialog -->
<div class="a" style="left:465px;top:98px;width:542px;height:617px;background:#f0f0f0;border:1px solid #6a6a6a;box-shadow:0 4px 15px 1px rgba(0,0,0,.30)"></div>
<div class="a" style="left:466px;top:99px;width:540px;height:30px;background:#fff"></div>
<div class="t" style="left:474.70px;top:108px;font-size:12px;letter-spacing:-0.080px;color:#000">Customize Columns</div>
<svg class="a" style="left:985px;top:107px" width="12" height="12" viewBox="0 0 12 12"><path d="M0.7 0.7 L11.3 11.3 M11.3 0.7 L0.7 11.3" stroke="#000" stroke-width="1.05"/></svg>
<div class="t" style="left:477.30px;top:139px;font-size:11.75px;transform:scaleX(0.9447);transform-origin:0 0;color:#000">Select the columns you want to display and order on screen</div>
<div class="a" style="left:478px;top:175px;width:315px;height:355px;border:1px solid #dadada"></div>
<div class="a" style="left:484.5px;top:169px;width:85.1px;height:13px;background:#f0f0f0"></div>
<div class="t" style="left:486.50px;top:170px;font-size:12.4px;transform:scaleX(0.9125);transform-origin:0 0;color:#e0652f;font-weight:bold">Columns name</div>
<div class="a" style="left:799px;top:175px;width:194px;height:355px;border:1px solid #dadada"></div>
<div class="a" style="left:806.5px;top:169px;width:145.1px;height:13px;background:#f0f0f0"></div>
<div class="t" style="left:808.50px;top:170px;font-size:12.4px;transform:scaleX(0.9437);transform-origin:0 0;color:#e0652f;font-weight:bold">Selected column settings</div>
<div class="a" style="left:805px;top:197px;width:182px;height:93px;border:1px solid #dadada"></div>
<div class="a" style="left:812.2px;top:191px;width:85.8px;height:13px;background:#f0f0f0"></div>
<div class="t" style="left:814.20px;top:192px;font-size:11.75px;transform:scaleX(0.8639);transform-origin:0 0;color:#e0652f">Position &amp; Display</div>
<div class="a" style="left:805px;top:308px;width:182px;height:104px;border:1px solid #dadada"></div>
<div class="a" style="left:812px;top:302px;width:31px;height:13px;background:#f0f0f0"></div>
<div class="t" style="left:814.00px;top:303px;font-size:11.75px;transform:scaleX(0.8990);transform-origin:0 0;color:#e0652f">Width</div>
<div class="a" style="left:805px;top:425px;width:182px;height:96px;border:1px solid #dadada"></div>
<div class="a" style="left:812px;top:419px;width:37px;height:13px;background:#f0f0f0"></div>
<div class="t" style="left:814.00px;top:420px;font-size:11.75px;transform:scaleX(0.8864);transform-origin:0 0;color:#e0652f">Default</div>
<div class="a" style="left:478px;top:539px;width:515px;height:135px;border:1px solid #dadada"></div>
<div class="a" style="left:484.4px;top:533px;width:145.1px;height:13px;background:#f0f0f0"></div>
<div class="t" style="left:486.40px;top:534px;font-size:11.75px;transform:scaleX(0.8714);transform-origin:0 0;color:#000">Create Custom Formula (9 left)</div>
<div class="a" style="left:484px;top:205px;width:303px;height:317px;background:#fff;border:1px solid #7a7a7a"></div>
<div class="a" style="left:486px;top:207px;width:13px;height:13px;background:#fff;border:1px solid #cfcfcf"><svg class="a" style="left:0;top:0" width="11" height="11" viewBox="0 0 11 11"><path d="M0.8 5.4 L3.8 8.4 L9.8 1.9" fill="none" stroke="#c6c6c6" stroke-width="1.3"/></svg></div>
<div class="t" style="left:503.40px;top:207px;font-size:11.75px;transform:scaleX(0.9188);transform-origin:0 0;color:#000">No</div>
<div class="a" style="left:486px;top:222px;width:13px;height:13px;background:#fff;border:1px solid #333"><svg class="a" style="left:0;top:0" width="11" height="11" viewBox="0 0 11 11"><path d="M0.8 5.4 L3.8 8.4 L9.8 1.9" fill="none" stroke="#333" stroke-width="1.3"/></svg></div>
<div class="t" style="left:503.40px;top:222px;font-size:11.75px;transform:scaleX(0.9537);transform-origin:0 0;color:#000">Carrier*</div>
<div class="a" style="left:486px;top:237px;width:13px;height:13px;background:#fff;border:1px solid #cfcfcf"><svg class="a" style="left:0;top:0" width="11" height="11" viewBox="0 0 11 11"><path d="M0.8 5.4 L3.8 8.4 L9.8 1.9" fill="none" stroke="#c6c6c6" stroke-width="1.3"/></svg></div>
<div class="t" style="left:503.40px;top:237px;font-size:11.75px;transform:scaleX(0.9187);transform-origin:0 0;color:#000">Ref #</div>
<div class="a" style="left:486px;top:252px;width:13px;height:13px;background:#fff;border:1px solid #cfcfcf"><svg class="a" style="left:0;top:0" width="11" height="11" viewBox="0 0 11 11"><path d="M0.8 5.4 L3.8 8.4 L9.8 1.9" fill="none" stroke="#c6c6c6" stroke-width="1.3"/></svg></div>
<div class="t" style="left:503.40px;top:252px;font-size:11.75px;transform:scaleX(0.9300);transform-origin:0 0;color:#000">PO #</div>
<div class="a" style="left:486px;top:267px;width:13px;height:13px;background:#fff;border:1px solid #333"></div>
<div class="t" style="left:503.40px;top:267px;font-size:11.75px;transform:scaleX(0.9397);transform-origin:0 0;color:#000">Ordered</div>
<div class="a" style="left:486px;top:282px;width:13px;height:13px;background:#fff;border:1px solid #333"></div>
<div class="t" style="left:503.40px;top:282px;font-size:11.75px;transform:scaleX(0.9327);transform-origin:0 0;color:#000">Customer</div>
<div class="a" style="left:486px;top:297px;width:13px;height:13px;background:#fff;border:1px solid #333"><svg class="a" style="left:0;top:0" width="11" height="11" viewBox="0 0 11 11"><path d="M0.8 5.4 L3.8 8.4 L9.8 1.9" fill="none" stroke="#333" stroke-width="1.3"/></svg></div>
<div class="t" style="left:503.40px;top:297px;font-size:11.75px;transform:scaleX(0.9320);transform-origin:0 0;color:#000">Account #</div>
<div class="a" style="left:486px;top:312px;width:13px;height:13px;background:#fff;border:1px solid #333"></div>
<div class="t" style="left:503.40px;top:312px;font-size:11.75px;transform:scaleX(0.9446);transform-origin:0 0;color:#000">Cross Reference #1</div>
<div class="a" style="left:486px;top:327px;width:13px;height:13px;background:#fff;border:1px solid #333"></div>
<div class="t" style="left:503.40px;top:327px;font-size:11.75px;transform:scaleX(0.9446);transform-origin:0 0;color:#000">Cross Reference #2</div>
<div class="a" style="left:486px;top:342px;width:13px;height:13px;background:#fff;border:1px solid #333"></div>
<div class="t" style="left:503.40px;top:342px;font-size:11.75px;transform:scaleX(0.9334);transform-origin:0 0;color:#000">Sales Rep</div>
<div class="a" style="left:486px;top:357px;width:13px;height:13px;background:#fff;border:1px solid #333"></div>
<div class="t" style="left:503.40px;top:357px;font-size:11.75px;transform:scaleX(0.9459);transform-origin:0 0;color:#000">Payment Terms</div>
<div class="a" style="left:486px;top:372px;width:13px;height:13px;background:#fff;border:1px solid #333"></div>
<div class="t" style="left:503.40px;top:372px;font-size:11.75px;transform:scaleX(0.9244);transform-origin:0 0;color:#000">Ship Date</div>
<div class="a" style="left:486px;top:387px;width:13px;height:13px;background:#fff;border:1px solid #333"><svg class="a" style="left:0;top:0" width="11" height="11" viewBox="0 0 11 11"><path d="M0.8 5.4 L3.8 8.4 L9.8 1.9" fill="none" stroke="#333" stroke-width="1.3"/></svg></div>
<div class="t" style="left:503.40px;top:387px;font-size:11.75px;transform:scaleX(0.9303);transform-origin:0 0;color:#000">Expected Date</div>
<div class="a" style="left:486px;top:402px;width:13px;height:13px;background:#fff;border:1px solid #333"></div>
<div class="t" style="left:503.40px;top:402px;font-size:11.75px;transform:scaleX(0.9606);transform-origin:0 0;color:#000">Total Weight</div>
<div class="a" style="left:486px;top:417px;width:13px;height:13px;background:#fff;border:1px solid #333"></div>
<div class="t" style="left:503.40px;top:417px;font-size:11.75px;transform:scaleX(0.9619);transform-origin:0 0;color:#000">Total Quantity</div>
<div class="a" style="left:486px;top:432px;width:13px;height:13px;background:#fff;border:1px solid #333"><svg class="a" style="left:0;top:0" width="11" height="11" viewBox="0 0 11 11"><path d="M0.8 5.4 L3.8 8.4 L9.8 1.9" fill="none" stroke="#333" stroke-width="1.3"/></svg></div>
<div class="t" style="left:503.40px;top:432px;font-size:11.75px;transform:scaleX(0.9358);transform-origin:0 0;color:#000">Bill to Company</div>
<div class="a" style="left:486px;top:447px;width:13px;height:13px;background:#fff;border:1px solid #333"><svg class="a" style="left:0;top:0" width="11" height="11" viewBox="0 0 11 11"><path d="M0.8 5.4 L3.8 8.4 L9.8 1.9" fill="none" stroke="#333" stroke-width="1.3"/></svg></div>
<div class="t" style="left:503.40px;top:447px;font-size:11.75px;transform:scaleX(0.9426);transform-origin:0 0;color:#000">Bill to Name</div>
<div class="a" style="left:486px;top:462px;width:13px;height:13px;background:#fff;border:1px solid #333"><svg class="a" style="left:0;top:0" width="11" height="11" viewBox="0 0 11 11"><path d="M0.8 5.4 L3.8 8.4 L9.8 1.9" fill="none" stroke="#333" stroke-width="1.3"/></svg></div>
<div class="t" style="left:503.40px;top:462px;font-size:11.75px;transform:scaleX(0.9406);transform-origin:0 0;color:#000">Bill to State</div>
<div class="a" style="left:486px;top:477px;width:13px;height:13px;background:#fff;border:1px solid #333"><svg class="a" style="left:0;top:0" width="11" height="11" viewBox="0 0 11 11"><path d="M0.8 5.4 L3.8 8.4 L9.8 1.9" fill="none" stroke="#333" stroke-width="1.3"/></svg></div>
<div class="t" style="left:503.40px;top:477px;font-size:11.75px;transform:scaleX(0.9624);transform-origin:0 0;color:#000">Bill to Zip</div>
<div class="a" style="left:486px;top:492px;width:13px;height:13px;background:#fff;border:1px solid #333"><svg class="a" style="left:0;top:0" width="11" height="11" viewBox="0 0 11 11"><path d="M0.8 5.4 L3.8 8.4 L9.8 1.9" fill="none" stroke="#333" stroke-width="1.3"/></svg></div>
<div class="t" style="left:503.40px;top:492px;font-size:11.75px;transform:scaleX(0.9229);transform-origin:0 0;color:#000">Ship to Name</div>
<div class="a" style="left:486px;top:507px;width:13px;height:13px;background:#fff;border:1px solid #333"><svg class="a" style="left:0;top:0" width="11" height="11" viewBox="0 0 11 11"><path d="M0.8 5.4 L3.8 8.4 L9.8 1.9" fill="none" stroke="#333" stroke-width="1.3"/></svg></div>
<div class="t" style="left:503.40px;top:507px;font-size:11.75px;transform:scaleX(0.9201);transform-origin:0 0;color:#000">Ship to State</div>
<div class="a" style="left:770px;top:206px;width:16px;height:315px;background:#f0f0f0"></div>
<div class="a" style="left:770px;top:223px;width:15px;height:227px;background:#cdcdcd"></div>
<svg class="a" style="left:774px;top:211px" width="8" height="6" viewBox="0 0 8 6"><path d="M0.4 5.7 L3.6 1.9 L6.8 5.7" fill="none" stroke="#555" stroke-width="2.1"/></svg>
<svg class="a" style="left:774px;top:509px" width="8" height="6" viewBox="0 0 8 6"><path d="M0.4 1.5 L3.6 5.5 L6.8 1.5" fill="none" stroke="#555" stroke-width="2.1"/></svg>
<div class="a" style="left:480px;top:218px;width:24px;height:307px;border:2px solid #e3101c"></div>
<div class="a" style="left:812px;top:216px;width:78px;height:26px;background:#cccccc;border:1px solid #bfbfbf"></div>
<div class="t" style="left:829.60px;top:223px;font-size:11.75px;transform:scaleX(0.9104);transform-origin:0 0;color:#8b8b8b">Move Up</div>
<div class="a" style="left:902px;top:216px;width:78px;height:26px;background:#cccccc;border:1px solid #bfbfbf"></div>
<div class="t" style="left:928.10px;top:223px;font-size:11.75px;transform:scaleX(0.8778);transform-origin:0 0;color:#8b8b8b">Show</div>
<div class="a" style="left:812px;top:250px;width:78px;height:26px;background:#cccccc;border:1px solid #bfbfbf"></div>
<div class="t" style="left:822.60px;top:257px;font-size:11.75px;transform:scaleX(0.9156);transform-origin:0 0;color:#8b8b8b">Move Down</div>
<div class="a" style="left:902px;top:250px;width:78px;height:26px;background:#cccccc;border:1px solid #bfbfbf"></div>
<div class="t" style="left:930.50px;top:257px;font-size:11.75px;transform:scaleX(0.8690);transform-origin:0 0;color:#8b8b8b">Hide</div>
<div class="a" style="left:826px;top:328px;width:13px;height:13px;background:#fff;border:1px solid #333"></div>
<div class="t" style="left:843.00px;top:328px;font-size:11.75px;transform:scaleX(0.9476);transform-origin:0 0;color:#000">Autosize column content</div>
<div class="t" style="left:829.30px;top:354px;font-size:11.75px;transform:scaleX(0.9708);transform-origin:0 0;color:#000">Fixed ( in pixels )</div>
<div class="a" style="left:917px;top:350px;width:43px;height:20px;background:#f0f0f0;border:1px solid #cdcdcd;box-shadow:inset 0 0 0 1px #fff"></div>
<div class="a" style="left:827px;top:374px;width:134px;height:27px;background:#cccccc;border:1px solid #bfbfbf"></div>
<div class="t" style="left:844.75px;top:381px;font-size:11.75px;transform:scaleX(0.9369);transform-origin:0 0;color:#a6a6a6;text-shadow:1px 1px 0 #fff">Apply Current Width</div>
<div class="t" style="left:825.20px;top:442px;font-size:11.75px;transform:scaleX(0.9360);transform-origin:0 0;color:#000">Current Default Date Column</div>
<div class="t" style="left:873.20px;top:464px;font-size:11.5px;letter-spacing:0.109px;color:#e0652f;font-weight:bold">Ordered</div>
<div class="t" style="left:484.34px;top:556px;font-size:12.7px;color:#000">Column Name</div>
<div class="t" style="left:518.93px;top:581px;font-size:12.7px;color:#000">Formula</div>
<div class="t" style="left:542.20px;top:607px;font-size:12.7px;color:#000">Join</div>
<div class="t" style="left:511.86px;top:632px;font-size:12.7px;color:#000">Group By</div>
<div class="a" style="left:578px;top:550px;width:173px;height:20px;background:#fff;border:1px solid #7a7a7a"></div>
<div class="a" style="left:578px;top:575px;width:358px;height:20px;background:#fff;border:1px solid #7a7a7a"></div>
<div class="a" style="left:578px;top:601px;width:358px;height:20px;background:#fff;border:1px solid #7a7a7a"></div>
<div class="a" style="left:578px;top:626px;width:358px;height:20px;background:#fff;border:1px solid #7a7a7a"></div>
<div class="a" style="left:946px;top:575.2px;width:16px;height:16px;background:#fffbe8;border:1.6px solid #e6c63c;border-radius:50%;box-shadow:1px 1px 2px rgba(0,0,0,.25)"></div>
<div class="t" style="left:950.64px;top:577px;font-size:11.75px;transform:scaleX(0.9362);transform-origin:0 0;color:#000;font-weight:bold">?</div>
<div class="a" style="left:579px;top:650px;width:103px;height:18px;background:#e9e9e9;border:1px solid #adadad;box-shadow:inset 0 0 0 1px #f3f3f3"></div>
<div class="t" style="left:595.03px;top:653px;font-size:11.75px;transform:scaleX(0.9362);transform-origin:0 0;color:#000">Verify and Add</div>
<div class="a" style="left:693px;top:650px;width:103px;height:18px;background:#e9e9e9;border:1px solid #adadad;box-shadow:inset 0 0 0 1px #f3f3f3"></div>
<div class="t" style="left:706.90px;top:653px;font-size:11.75px;transform:scaleX(0.9362);transform-origin:0 0;color:#000">Delete Formula</div>
<div class="a" style="left:479px;top:682px;width:85px;height:26px;background:#e1e1e1;border:1px solid #adadad"></div>
<div class="t" style="left:499.18px;top:689px;font-size:11.75px;transform:scaleX(0.9362);transform-origin:0 0;color:#000">Add New</div>
<div class="a" style="left:799px;top:682px;width:85px;height:26px;background:#e1e1e1;border:2px solid #0078d7"></div>
<div class="t" style="left:808.18px;top:689px;font-size:11.75px;transform:scaleX(0.9362);transform-origin:0 0;color:#000">Save &amp; Close</div>
<div class="a" style="left:919px;top:682px;width:73px;height:26px;background:#e1e1e1;border:1px solid #adadad"></div>
<div class="t" style="left:941.44px;top:689px;font-size:11.75px;transform:scaleX(0.9362);transform-origin:0 0;color:#000">Close</div>
</body>
</html>
